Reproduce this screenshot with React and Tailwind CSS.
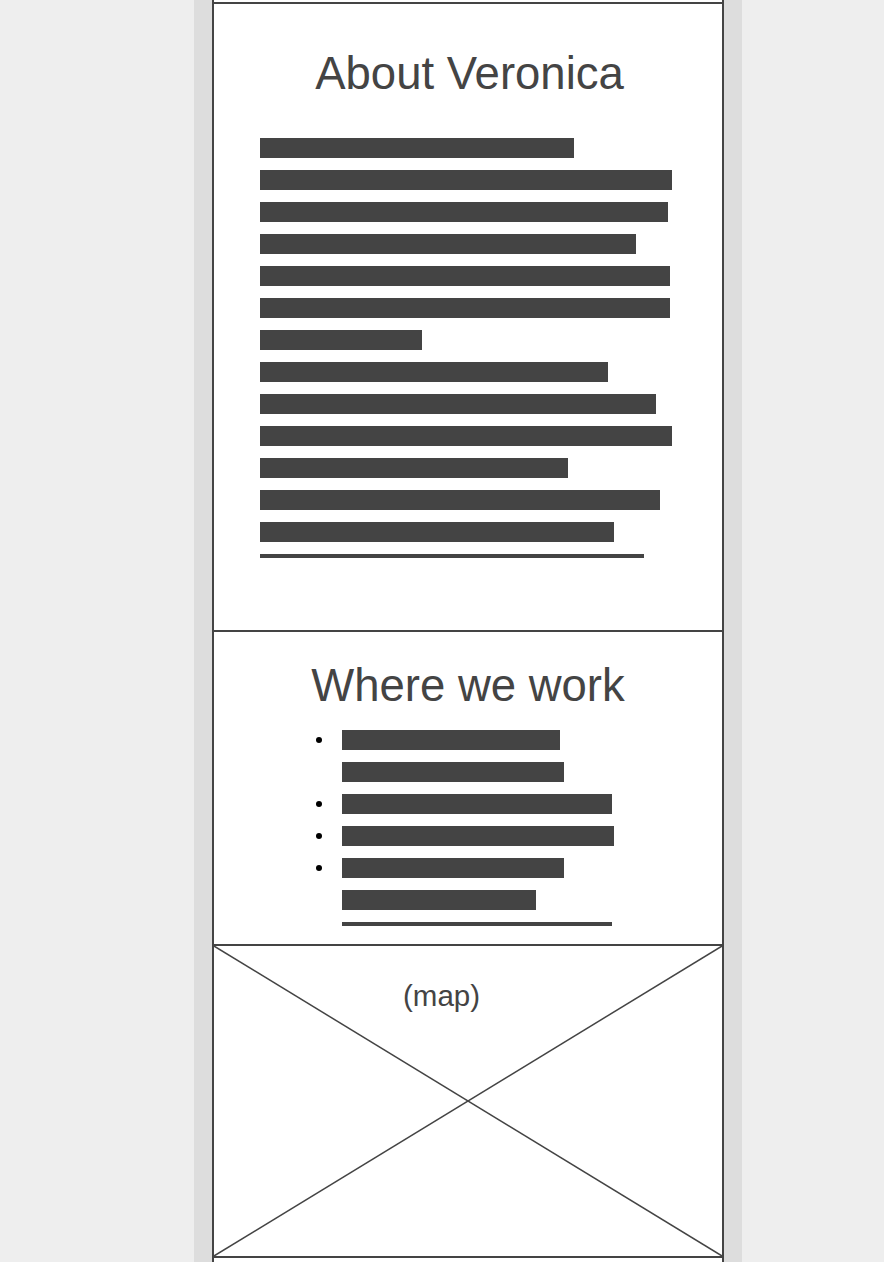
const aboutBars = [314, 412, 408, 376, 410, 410, 162, 348, 396, 412, 308, 400, 354];

const workRows = [
  { w: 218, bullet: true },
  { w: 222, bullet: false },
  { w: 270, bullet: true },
  { w: 272, bullet: true },
  { w: 222, bullet: true },
  { w: 194, bullet: false },
];

function Bar({ w }) {
  return <div className="h-[20px] bg-[#444]" style={{ width: w }} />;
}

export default function App() {
  return (
    <div className="min-h-screen bg-[#eee] font-['Liberation_Sans',Arial,sans-serif] text-[#444]">
      <div className="ml-[194px] w-[548px] bg-[#ddd] px-[18px]">
        <div className="border-x-2 border-[#444] bg-white">
          {/* previous section edge */}
          <div className="h-[2px]" />
          <div className="h-[2px] bg-[#444]" />

          {/* about */}
          <section className="border-b-2 border-[#444] pt-[47px] pb-[72px]">
            <h2 className="h-[45px] pl-[3px] text-center text-[45.5px] leading-[45px] font-normal">About Veronica</h2>
            <div className="mt-[42px] flex flex-col gap-[12px] pl-[46px]">
              {aboutBars.map((w, i) => (
                <Bar key={i} w={w} />
              ))}
              <div className="h-[4px] w-[384px] bg-[#444]" />
            </div>
          </section>

          {/* where we work */}
          <section className="border-b-2 border-[#444] pt-[31px] pb-[18px]">
            <h2 className="h-[45px] text-center text-[45.5px] leading-[45px] font-normal">Where we work</h2>
            <ul className="mt-[22px] flex flex-col gap-[12px] pl-[100px]">
              {workRows.map((r, i) => (
                <li key={i} className="flex items-center">
                  <span className="flex w-[28px] items-center">
                    {r.bullet && <span className="ml-[2px] h-[6px] w-[6px] rounded-full bg-black" />}
                  </span>
                  <Bar w={r.w} />
                </li>
              ))}
              <li className="pl-[28px]">
                <div className="h-[4px] w-[270px] bg-[#444]" />
              </li>
            </ul>
          </section>

          {/* map */}
          <section className="relative h-[312px] border-b-2 border-[#444]">
            <svg className="absolute inset-0 h-[310px] w-[508px]" viewBox="0 0 508 310" preserveAspectRatio="none">
              <line x1="0" y1="0" x2="508" y2="310" stroke="#444" strokeWidth="1.5" />
              <line x1="508" y1="0" x2="0" y2="310" stroke="#444" strokeWidth="1.5" />
            </svg>
            <p className="relative pt-[35px] pl-[189px] text-[29.5px] leading-[29px]">(map)</p>
          </section>

          <div className="h-[4px]" />
        </div>
      </div>
    </div>
  );
}
